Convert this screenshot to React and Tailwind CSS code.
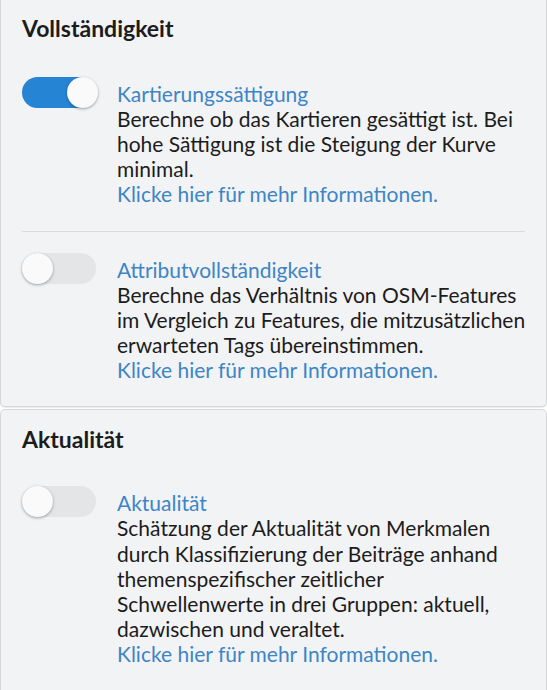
import React, { useState } from 'react';

const Toggle = ({ on, onChange }) => {
  return (
    <button
      onClick={onChange}
      className={`relative shrink-0 w-[74px] h-[31px] rounded-full ${on ? 'bg-[#2684d4]' : 'bg-[#e4e5e7]'}`}
    >
      <span
        className={`absolute top-0 w-[31px] h-[31px] rounded-full bg-[#fafafa] shadow-[0_1px_3px_rgba(0,0,0,0.35)] ${on ? 'left-[45px]' : 'left-0'}`}
      />
    </button>
  );
};

const Item = ({ title, text, on, onChange }) => {
  return (
    <div className="flex gap-[21px]">
      <Toggle on={on} onChange={onChange} />
      <div className="-mr-[8px] pt-[4px] text-[21px] leading-[25.2px]">
        <a href="#" className="block text-[#3d85c6]">{title}</a>
        <p className="text-[#1c1c1c]">{text}</p>
        <a href="#" className="block text-[#3d85c6]">Klicke hier für mehr Informationen.</a>
      </div>
    </div>
  );
};

const App = () => {
  const [sat, setSat] = useState(true);
  const [attr, setAttr] = useState(false);
  const [curr, setCurr] = useState(false);

  return (
    <div className="min-h-[690px] bg-white font-['Lato',sans-serif]">
      <div className="bg-[#f2f3f5] border-x border-b border-[#d6d7d9] rounded-b-[5px] shadow-[0_1px_1px_rgba(0,0,0,0.08)] px-[21px] pt-[15px] pb-[23px]">
        <h2 className="text-[23px] leading-[27.6px] font-bold text-[#1c1c1c]">Vollständigkeit</h2>
        <div className="mt-[34px]">
          <Item
            title="Kartierungssättigung"
            text="Berechne ob das Kartieren gesättigt ist. Bei hohe Sättigung ist die Steigung der Kurve minimal."
            on={sat}
            onChange={() => setSat(!sat)}
          />
        </div>
        <div className="mt-[24px] mb-[21px] border-t border-[#d9dadc]" />
        <Item
          title="Attributvollständigkeit"
          text="Berechne das Verhältnis von OSM-Features im Vergleich zu Features, die mitzusätzlichen erwarteten Tags übereinstimmen."
          on={attr}
          onChange={() => setAttr(!attr)}
        />
      </div>
      <div className="mt-[2px] bg-[#f2f3f5] border border-[#d6d7d9] rounded-[5px] px-[21px] pt-[16px] pb-[28px]">
        <h2 className="text-[23px] leading-[27.6px] font-bold text-[#1c1c1c]">Aktualität</h2>
        <div className="mt-[33px]">
          <Item
            title="Aktualität"
            text="Schätzung der Aktualität von Merkmalen durch Klassifizierung der Beiträge anhand themenspezifischer zeitlicher Schwellenwerte in drei Gruppen: aktuell, dazwischen und veraltet."
            on={curr}
            onChange={() => setCurr(!curr)}
          />
        </div>
      </div>
    </div>
  );
};

export default App;
